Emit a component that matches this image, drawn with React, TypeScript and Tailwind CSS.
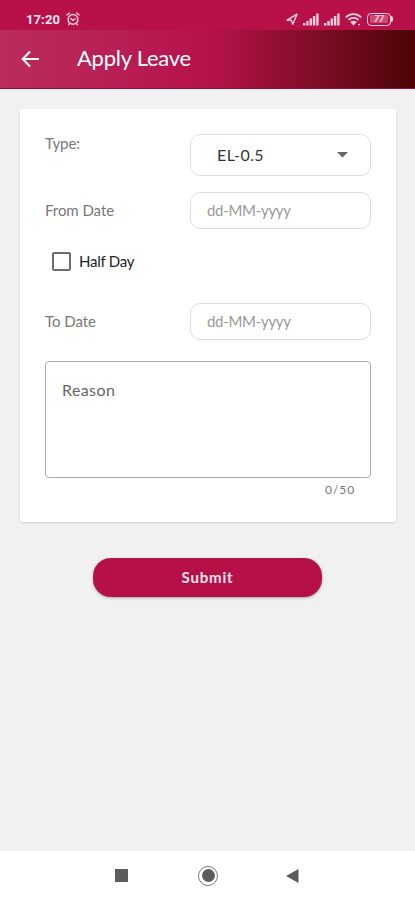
import React, { useState } from "react";

const MAX_REASON = 50;

function SignalIcon() {
  return (
    <svg width="16" height="13" viewBox="0 0 16 13" fill="currentColor">
      <rect x="0" y="10" width="2.4" height="2.5" />
      <rect x="3.3" y="8" width="2.4" height="4.5" />
      <rect x="6.6" y="5.5" width="2.4" height="7" />
      <rect x="9.9" y="3" width="2.4" height="9.5" />
      <rect x="13.2" y="0.5" width="2.4" height="12" />
    </svg>
  );
}

function StatusBar() {
  return (
    <div className="flex h-[30px] items-center bg-[#b81149] pt-[8px] pl-[26px] text-[#f8cfdc]">
      <span className="w-[40px] font-['Roboto',sans-serif] text-[13px] leading-none font-bold tracking-[0.1px] text-[#fde6ee]">
        17:20
      </span>
      <svg
        width="14"
        height="14"
        viewBox="0 0 14 14"
        fill="none"
        stroke="currentColor"
        strokeWidth="1.4"
        strokeLinecap="round"
      >
        <circle cx="7" cy="7.4" r="4.9" />
        <path d="M1 2.9 3.4 1M13 2.9 10.6 1M4.9 6.6 7 8.3l2.1-1.4M3.6 11.4l-1 1.3M10.4 11.4l1 1.3" />
      </svg>
      <div className="ml-auto flex items-center pr-[22px]">
        <svg
          width="13"
          height="13"
          viewBox="0 0 13 13"
          fill="none"
          stroke="currentColor"
          strokeWidth="1.4"
          strokeLinejoin="round"
          className="mr-[4px]"
        >
          <path d="M11 1.2 1 7.2l4-.2 1.8 4.2L11 1.2Z" />
        </svg>
        <SignalIcon />
        <span className="w-[5px]" />
        <SignalIcon />
        <svg
          width="17"
          height="13"
          viewBox="0 0 17 13"
          fill="none"
          stroke="currentColor"
          strokeWidth="1.8"
          className="mr-[5px] ml-[5px]"
        >
          <path d="M.8 4.3C5 .1 12 .1 16.2 4.3M3.4 6.9c2.9-2.7 7.3-2.7 10.2 0" />
          <path d="M5.2 9c2-1.6 4.6-1.6 6.6 0l-3.3 3.6Z" fill="currentColor" stroke="none" />
          <path d="M13 11.6h2" strokeWidth="1.4" />
        </svg>
        <div className="flex h-[13px] w-[24px] items-center justify-center rounded-[4px] border-[1.5px] border-current">
          <span className="flex h-[8px] w-[18px] items-center justify-center rounded-[1px] bg-white/25 font-['Roboto',sans-serif] text-[9px] leading-none font-bold italic">
            77
          </span>
        </div>
        <span className="h-[6px] w-[2px] rounded-r-sm bg-current" />
      </div>
    </div>
  );
}

function Header() {
  return (
    <header className="flex h-[59px] items-center border-b border-[#a00c3d] bg-[linear-gradient(90deg,#bb2c5c_0%,#b81f54_27%,#b6124a_51%,#7c0d24_77%,#4b0307_100%)] pl-[21px] text-white">
      <button type="button" aria-label="Back">
        <svg width="19" height="18" viewBox="0 0 19 18" fill="none" stroke="currentColor" strokeWidth="2">
          <path d="M18 9H2M9 1.5 1.7 9 9 16.5" />
        </svg>
      </button>
      <h1 className="ml-[37px] pb-[2px] text-[22px] leading-none font-normal tracking-[-0.25px] whitespace-nowrap">
        Apply Leave
      </h1>
    </header>
  );
}

function DateRow({
  label,
  value,
  onChange,
}: {
  label: string;
  value: string;
  onChange: (value: string) => void;
}) {
  return (
    <div className="flex h-[37px] items-center justify-between">
      <label className="pb-[2px] text-[15px] leading-[18px] tracking-[-0.05px] text-[#777]">{label}</label>
      <input
        className="h-full w-[181px] rounded-[10px] border border-[#dedede] bg-white pr-3 pb-[2px] pl-[16px] text-[15px] tracking-[-0.3px] text-[#444] placeholder-[#999] outline-none"
        value={value}
        onChange={(e) => onChange(e.target.value)}
        placeholder="dd-MM-yyyy"
      />
    </div>
  );
}

export default function App() {
  const [fromDate, setFromDate] = useState("");
  const [toDate, setToDate] = useState("");
  const [halfDay, setHalfDay] = useState(false);
  const [reason, setReason] = useState("");

  return (
    <div className="flex h-[900px] w-[415px] flex-col overflow-hidden bg-[#f1f1f1] font-['Lato','Open_Sans',sans-serif]">
      <StatusBar />
      <Header />

      <main className="flex flex-1 flex-col items-center pt-[20px]">
        <form className="ml-[1px] flex h-[413px] w-[376px] flex-col rounded-[2px] bg-white px-[25px] pt-[25px] shadow-[0_1px_2px_rgba(0,0,0,0.16)]">
          <div className="flex justify-between">
            <span className="text-[15px] leading-[18px] tracking-[-0.1px] text-[#777]">Type:</span>
            <button
              type="button"
              className="flex h-[42px] w-[181px] items-center justify-between rounded-[10px] border border-[#dedede] pr-[22px] pl-[26px] text-[16px] tracking-[0.4px] text-[#333]"
            >
              EL-0.5
              <svg width="11" height="6" viewBox="0 0 11 6" fill="#666">
                <path d="M0 0h11L5.5 5.5Z" />
              </svg>
            </button>
          </div>

          <div className="mt-[16px]">
            <DateRow label="From Date" value={fromDate} onChange={setFromDate} />
          </div>

          <label className="mt-[23px] flex h-[19px] items-center gap-[8px] pl-[7px] text-[15px] tracking-[-0.25px] text-[#222]">
            <input
              type="checkbox"
              className="size-[19px] appearance-none rounded-[2px] border-2 border-[#6d6d6d] checked:bg-[#b81149]"
              checked={halfDay}
              onChange={(e) => setHalfDay(e.target.checked)}
            />
            <span className="pb-[1px]">Half Day</span>
          </label>

          <div className="mt-[32px]">
            <DateRow label="To Date" value={toDate} onChange={setToDate} />
          </div>

          <textarea
            className="mt-[21px] block h-[117px] w-full shrink-0 resize-none rounded-[4px] border-[1.5px] border-[#aaa] px-[16px] pt-[18px] text-[16px] leading-[20px] tracking-[0.4px] text-[#333] placeholder-[#666] outline-none"
            placeholder="Reason"
            maxLength={MAX_REASON}
            value={reason}
            onChange={(e) => setReason(e.target.value)}
          />
          <span className="mt-[3px] pr-[16px] text-right text-[12px] leading-[18px] tracking-[0.9px] text-[#777]">
            {reason.length}/{MAX_REASON}
          </span>
        </form>

        <button
          type="button"
          className="mt-[36px] h-[39px] w-[229px] rounded-[18px] bg-[#b61147] pb-[1px] text-[15px] font-bold tracking-[0.85px] text-[#fde6ee] shadow-[0_1px_3px_rgba(0,0,0,0.3)]"
        >
          Submit
        </button>
      </main>

      <nav className="flex h-[49px] items-center bg-white pl-[115px]">
        <span className="size-[13px] bg-[#5c5c5c]" />
        <span className="ml-[70px] flex size-[20px] items-center justify-center rounded-full border-[1.5px] border-[#777]">
          <span className="size-[13px] rounded-full bg-[#5c5c5c]" />
        </span>
        <svg width="13" height="14" viewBox="0 0 13 14" fill="#5c5c5c" className="ml-[68px]">
          <path d="M12.5 0v14L0 7Z" />
        </svg>
      </nav>
    </div>
  );
}
